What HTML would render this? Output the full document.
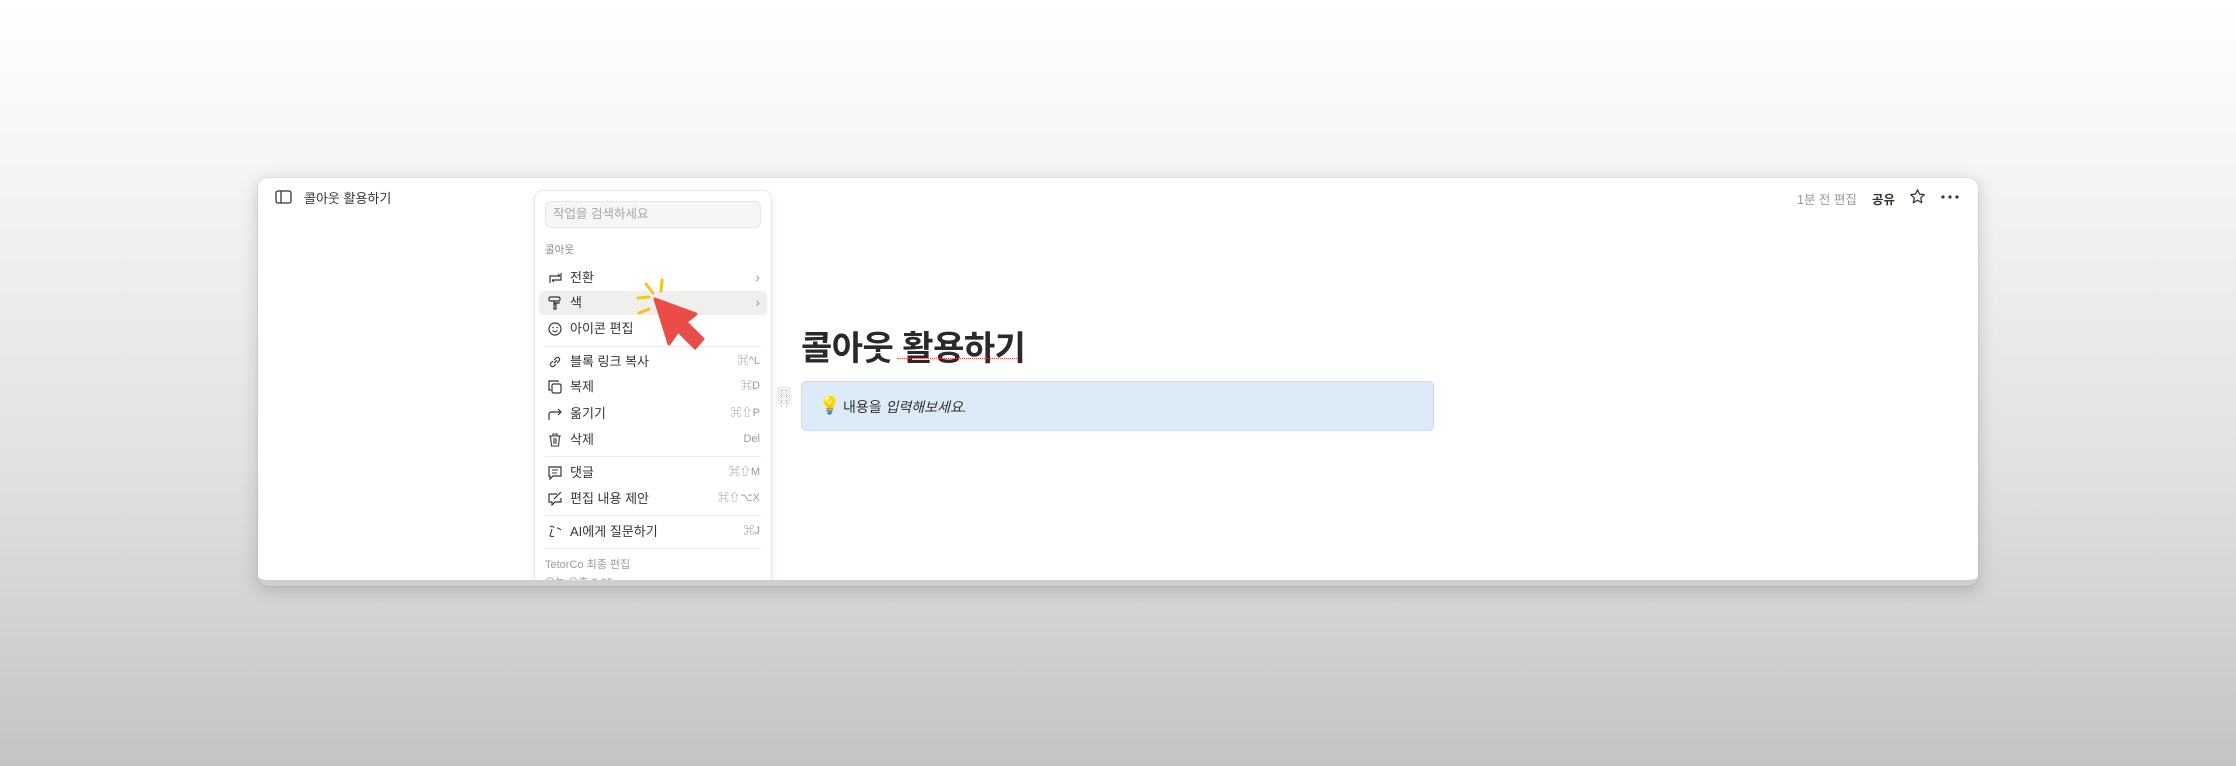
<!DOCTYPE html>
<html><head><meta charset="utf-8"><style>
*{margin:0;padding:0;box-sizing:border-box}
body{width:2236px;height:766px;overflow:hidden;background:linear-gradient(#ffffff 0%,#f3f3f3 25%,#e2e2e2 60%,#c4c4c4 100%);font-family:"Liberation Sans","Noto Sans CJK KR",sans-serif;position:relative;color:#37352f}
.win{position:absolute;left:258px;top:178px;width:1720px;height:408px;background:#fff;border-radius:10px;box-shadow:0 4px 18px rgba(0,0,0,.18),0 0 0 1px rgba(0,0,0,.05);overflow:hidden;border-bottom:6px solid #cfcfcf}
.a{position:absolute;white-space:nowrap}
.menu{position:absolute;left:277px;top:13px;width:236px;height:400px;background:#fff;border-radius:8px;box-shadow:0 0 0 1px rgba(0,0,0,.07),0 4px 12px rgba(0,0,0,.08)}
.row{position:absolute;left:0;width:236px;height:25px;font-size:13px;color:#37352f;line-height:25px}
.row .t{position:absolute;left:35px}
.row .k{position:absolute;right:11px;font-size:11px;color:#9b9a97}
.row svg{position:absolute;left:13px;top:6px}
.sep{position:absolute;left:10px;width:216px;height:1px;background:#ececeb}
</style></head><body>
<div class="win">
  <svg class="a" style="left:17px;top:12px" width="17" height="14" viewBox="0 0 17 14"><rect x="1" y="1" width="15" height="12" rx="2" fill="none" stroke="#37352f" stroke-width="1.3"/><line x1="6" y1="1" x2="6" y2="13" stroke="#37352f" stroke-width="1.3"/></svg>
  <div class="a" style="left:46px;top:10px;font-size:13px">콜아웃 활용하기</div>
  <div class="a" style="left:1539px;top:11px;font-size:12.5px;color:#9b9a97">1분 전 편집</div>
  <div class="a" style="left:1614px;top:11px;font-size:12.5px;font-weight:bold">공유</div>
  <svg class="a" style="left:1651px;top:10px" width="17" height="17" viewBox="0 0 24 24"><path d="M12 2.5l2.9 6.2 6.7.7-5 4.6 1.4 6.7L12 17.3l-5.9 3.4 1.4-6.7-5-4.6 6.7-.7z" fill="none" stroke="#37352f" stroke-width="1.8" stroke-linejoin="round"/></svg>
  <svg class="a" style="left:1683px;top:17px" width="18" height="4" viewBox="0 0 18 4"><circle cx="2" cy="2" r="1.6" fill="#37352f"/><circle cx="9" cy="2" r="1.6" fill="#37352f"/><circle cx="16" cy="2" r="1.6" fill="#37352f"/></svg>
  <div class="a" style="left:543px;top:143px;font-size:34px;font-weight:bold;color:#2a2a2a;letter-spacing:-0.5px">콜아웃 활용하기</div>
  <div class="a" style="left:639px;top:180px;width:120px;border-bottom:1px dotted #e05050"></div>
  <div class="a" style="left:519px;top:208px;width:14px;height:19px;background:#f0f0ef;border-radius:3px;color:#999;font-size:9px;line-height:6px;text-align:center;padding-top:3px">: :<br>: :<br>: :</div>
  <div class="a" style="left:543px;top:203px;width:633px;height:50px;background:#ddebf8;border:1px solid #c9dcef;border-radius:5px"></div>
  <div class="a" style="left:561px;top:218px;font-size:17px">💡</div>
  <div class="a" style="left:585px;top:219px;font-size:14px;color:#2f2f2f">내용을 <i>입력해보세요.</i></div>
<div class="menu">
  <div class="a" style="left:10px;top:10px;width:216px;height:27px;background:#f6f6f5;border:1px solid #e6e6e4;border-radius:6px;font-size:12.5px;color:#a9a8a5;line-height:25px;padding-left:7px">작업을 검색하세요</div>
  <div class="a" style="left:10px;top:51px;font-size:10.5px;color:#8a8986">콜아웃</div>
  <div class="a" style="left:4px;top:100px;width:228px;height:24px;background:#efefee;border-radius:5px"></div>
  <div class="row" style="top:74px"><svg width="16" height="14" viewBox="0 0 16 14"><path d="M2 12V5h10M10 3l2 2M13 2v7H4M6 11l-2-2" fill="none" stroke="#37352f" stroke-width="1.2"/></svg><span class="t">전환</span><span class="k" style="font-size:14px">›</span></div>
  <div class="row" style="top:99px"><svg width="14" height="14" viewBox="0 0 14 14"><rect x="1" y="1" width="11" height="4" rx="1.5" fill="none" stroke="#37352f" stroke-width="1.2"/><path d="M6 5v2h5v-1M7 7v1M6 8h2v5H6z" fill="none" stroke="#37352f" stroke-width="1.2"/></svg><span class="t">색</span><span class="k" style="font-size:14px">›</span></div>
  <div class="row" style="top:125px"><svg width="14" height="14" viewBox="0 0 14 14"><circle cx="7" cy="7" r="6" fill="none" stroke="#37352f" stroke-width="1.2"/><circle cx="5" cy="5.5" r=".8" fill="#37352f"/><circle cx="9" cy="5.5" r=".8" fill="#37352f"/><path d="M4.5 8.5q2.5 2.5 5 0" fill="none" stroke="#37352f" stroke-width="1.1"/></svg><span class="t">아이콘 편집</span></div>
  <div class="sep" style="top:155px"></div>
  <div class="row" style="top:158px"><svg width="14" height="14" viewBox="0 0 14 14"><path d="M6 8l3-3M5 6L3 8a2 2 0 003 3l2-2M9 8l2-2a2 2 0 00-3-3L6 5" fill="none" stroke="#37352f" stroke-width="1.2"/></svg><span class="t">블록 링크 복사</span><span class="k">⌘^L</span></div>
  <div class="row" style="top:183px"><svg width="14" height="14" viewBox="0 0 14 14"><rect x="4" y="4" width="9" height="9" rx="1.5" fill="none" stroke="#37352f" stroke-width="1.2"/><path d="M10 2V1H1v9h2" fill="none" stroke="#37352f" stroke-width="1.2"/></svg><span class="t">복제</span><span class="k">⌘D</span></div>
  <div class="row" style="top:210px"><svg width="14" height="14" viewBox="0 0 14 14"><path d="M1 13V7a2 2 0 012-2h10M10 2l3 3-3 3" fill="none" stroke="#37352f" stroke-width="1.2"/></svg><span class="t">옮기기</span><span class="k">⌘⇧P</span></div>
  <div class="row" style="top:236px"><svg width="14" height="14" viewBox="0 0 14 14"><path d="M1 3h12M5 3V1h4v2M2.5 3l1 10h7l1-10M6 5v6M8 5v6" fill="none" stroke="#37352f" stroke-width="1.1"/></svg><span class="t">삭제</span><span class="k">Del</span></div>
  <div class="sep" style="top:265px"></div>
  <div class="row" style="top:269px"><svg width="14" height="14" viewBox="0 0 14 14"><path d="M1 1h12v9H5l-3 3v-3H1z" fill="none" stroke="#37352f" stroke-width="1.2"/><path d="M4 4h6M4 7h5" stroke="#37352f" stroke-width="1.1"/></svg><span class="t">댓글</span><span class="k">⌘⇧M</span></div>
  <div class="row" style="top:295px"><svg width="14" height="14" viewBox="0 0 14 14"><path d="M9 2H1v8h3v3l3-3h6V6" fill="none" stroke="#37352f" stroke-width="1.2"/><path d="M6 7l7-7" stroke="#37352f" stroke-width="1.2"/></svg><span class="t">편집 내용 제안</span><span class="k">⌘⇧⌥X</span></div>
  <div class="sep" style="top:324px"></div>
  <div class="row" style="top:328px"><svg width="14" height="14" viewBox="0 0 14 14"><path d="M2 2q3-2 4 1M4 4l-2 7q3 1 4 0M9 3q2 0 4 2" fill="none" stroke="#37352f" stroke-width="1.1"/></svg><span class="t">AI에게 질문하기</span><span class="k">⌘J</span></div>
  <div class="sep" style="top:357px"></div>
  <div class="a" style="left:10px;top:365px;font-size:11px;color:#9b9a97">TetorCo 최종 편집</div>
  <div class="a" style="left:10px;top:383px;font-size:11px;color:#9b9a97">오늘 오후 3:05</div>
</div>
</div>
<svg class="a" style="left:630px;top:270px" width="90" height="90" viewBox="630 270 90 90">
  <polygon points="655,299 696,314 686,322 703,339 695,348 678,331 669,344" fill="#ea4d47" stroke="#ea4d47" stroke-width="3" stroke-linejoin="round"/>
  <g stroke="#f5c518" stroke-width="3" stroke-linecap="round"><line x1="646" y1="284" x2="653" y2="293"/><line x1="662" y1="280" x2="661" y2="291"/><line x1="638" y1="298" x2="649" y2="297"/><line x1="639" y1="313" x2="649" y2="309"/></g>
</svg>
</body></html>
